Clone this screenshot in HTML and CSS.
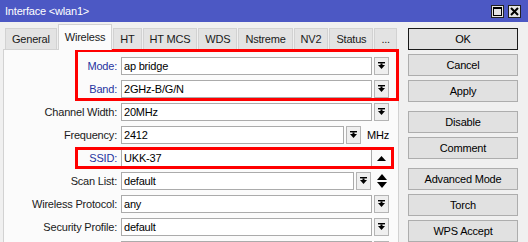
FILE: index.html
```html
<!DOCTYPE html>
<html>
<head>
<meta charset="utf-8">
<link rel="stylesheet" href="styles.css">
</head>
<body>
<div class="window">
  <div class="titlebar">
    <span class="title">Interface &lt;wlan1&gt;</span>
    <div class="tb-btns">
      <span class="tb-btn"><svg width="9" height="9" viewBox="0 0 9 9"><rect x="0.5" y="0.5" width="8" height="8" fill="none" stroke="#000" stroke-width="1"/><rect x="0" y="0" width="9" height="2" fill="#000"/></svg></span>
      <span class="tb-btn"><svg width="9" height="9" viewBox="0 0 9 9"><path d="M1 1 L8 8 M8 1 L1 8" stroke="#000" stroke-width="2"/></svg></span>
    </div>
  </div>
  <div class="main">
    <div class="left">
      <div class="tabs">
        <div class="tab">General</div>
        <div class="tab active">Wireless</div>
        <div class="tab">HT</div>
        <div class="tab">HT MCS</div>
        <div class="tab">WDS</div>
        <div class="tab">Nstreme</div>
        <div class="tab">NV2</div>
        <div class="tab">Status</div>
        <div class="tab">...</div>
      </div>
      <div class="panel">
        <div class="row">
          <span class="label hl">Mode:</span>
          <span class="input">ap bridge</span>
          <span class="dd"><svg width="7" height="8" viewBox="0 0 7 8"><rect x="0" y="0" width="7" height="1.4" fill="#000"/><rect x="2.5" y="1.4" width="2" height="2" fill="#000"/><polygon points="0,3 7,3 3.5,7" fill="#000"/></svg></span>
        </div>
        <div class="row">
          <span class="label hl">Band:</span>
          <span class="input">2GHz-B/G/N</span>
          <span class="dd"><svg width="7" height="8" viewBox="0 0 7 8"><rect x="0" y="0" width="7" height="1.4" fill="#000"/><rect x="2.5" y="1.4" width="2" height="2" fill="#000"/><polygon points="0,3 7,3 3.5,7" fill="#000"/></svg></span>
        </div>
        <div class="row">
          <span class="label">Channel Width:</span>
          <span class="input">20MHz</span>
          <span class="dd"><svg width="7" height="8" viewBox="0 0 7 8"><rect x="0" y="0" width="7" height="1.4" fill="#000"/><rect x="2.5" y="1.4" width="2" height="2" fill="#000"/><polygon points="0,3 7,3 3.5,7" fill="#000"/></svg></span>
        </div>
        <div class="row">
          <span class="label">Frequency:</span>
          <span class="input w-freq">2412</span>
          <span class="dd"><svg width="7" height="8" viewBox="0 0 7 8"><rect x="0" y="0" width="7" height="1.4" fill="#000"/><rect x="2.5" y="1.4" width="2" height="2" fill="#000"/><polygon points="0,3 7,3 3.5,7" fill="#000"/></svg></span>
          <span class="unit">MHz</span>
        </div>
        <div class="row">
          <span class="label hl">SSID:</span>
          <span class="input">UKK-37</span>
          <span class="flat"><svg width="9" height="5" viewBox="0 0 9 5"><polygon points="0,5 9,5 4.5,0" fill="#000"/></svg></span>
        </div>
        <div class="row">
          <span class="label">Scan List:</span>
          <span class="input w-scan">default</span>
          <span class="dd"><svg width="7" height="8" viewBox="0 0 7 8"><rect x="0" y="0" width="7" height="1.4" fill="#000"/><rect x="2.5" y="1.4" width="2" height="2" fill="#000"/><polygon points="0,3 7,3 3.5,7" fill="#000"/></svg></span>
          <span class="updown"><svg width="10" height="14" viewBox="0 0 10 14"><polygon points="0,6 10,6 5,0" fill="#000"/><polygon points="0,8 10,8 5,14" fill="#000"/></svg></span>
        </div>
        <div class="row">
          <span class="label">Wireless Protocol:</span>
          <span class="input">any</span>
          <span class="dd"><svg width="7" height="8" viewBox="0 0 7 8"><rect x="0" y="0" width="7" height="1.4" fill="#000"/><rect x="2.5" y="1.4" width="2" height="2" fill="#000"/><polygon points="0,3 7,3 3.5,7" fill="#000"/></svg></span>
        </div>
        <div class="row">
          <span class="label">Security Profile:</span>
          <span class="input">default</span>
          <span class="dd"><svg width="7" height="8" viewBox="0 0 7 8"><rect x="0" y="0" width="7" height="1.4" fill="#000"/><rect x="2.5" y="1.4" width="2" height="2" fill="#000"/><polygon points="0,3 7,3 3.5,7" fill="#000"/></svg></span>
        </div>
        <div class="row">
          <span class="label"></span>
          <span class="input"></span>
          <span class="dd"></span>
        </div>
      </div>
      <div class="mark mark-1"></div>
      <div class="mark mark-2"></div>
    </div>
    <div class="side">
      <div class="group">
        <div class="btn default">OK</div>
        <div class="btn">Cancel</div>
        <div class="btn">Apply</div>
      </div>
      <div class="group">
        <div class="btn">Disable</div>
        <div class="btn">Comment</div>
      </div>
      <div class="group">
        <div class="btn">Advanced Mode</div>
        <div class="btn">Torch</div>
        <div class="btn">WPS Accept</div>
      </div>
    </div>
  </div>
</div>
</body>
</html>
```
FILE: styles.css
```css
* { box-sizing: border-box; }
html, body { margin: 0; padding: 0; }
body {
  width: 528px;
  height: 242px;
  overflow: hidden;
  background: #f0f0f0;
  font-family: "Liberation Sans", Arial, sans-serif;
  font-size: 11px;
  letter-spacing: -0.2px;
  color: #1a1a1a;
}
.window { width: 528px; height: 242px; overflow: hidden; }
.titlebar {
  height: 22px;
  background: #4c58c4;
  display: flex;
  align-items: center;
  justify-content: space-between;
  padding: 0 7px 0 5px;
}
.title { color: #fff; font-size: 11px; }
.tb-btns { display: flex; gap: 4px; }
.tb-btn {
  width: 13px;
  height: 13px;
  background: #e4e4e4;
  border: 1px solid #222;
  display: flex;
  align-items: center;
  justify-content: center;
}
.main { display: flex; }
.left {
  position: relative;
  width: 399px;
  padding-left: 3px;
}
.tabs {
  display: flex;
  align-items: flex-end;
  height: 27px;
  padding-left: 2px;
}
.tab {
  height: 21px;
  padding: 0 6px;
  display: flex;
  align-items: center;
  background: #e3e3e3;
  border: 1px solid #d2d2d2;
  border-bottom: none;
  margin-right: 1px;
}
.tab.active {
  height: 26px;
  background: #fbfbfb;
  margin-bottom: -1px;
  position: relative;
  z-index: 1;
  padding-bottom: 2px;
}
.panel {
  height: 200px;
  background: #fbfbfb;
  border: 1px solid #d2d2d2;
  padding-top: 7px;
  display: flex;
  flex-direction: column;
  gap: 5px;
}
.row { display: flex; align-items: center; height: 18px; flex-shrink: 0; }
.label {
  width: 113px;
  margin-right: 4px;
  text-align: right;
  white-space: nowrap;
}
.label.hl { color: #2633a0; }
.input {
  width: 251px;
  height: 18px;
  background: #fff;
  border: 1px solid #ababab;
  padding-left: 2px;
  line-height: 16px;
  color: #000;
}
.input.w-freq { width: 223px; }
.input.w-scan { width: 233px; }
.dd {
  width: 15px;
  height: 18px;
  margin-left: 2px;
  background: #efefef;
  border: 1px solid #b4b4b4;
  display: flex;
  align-items: center;
  justify-content: center;
}
.flat {
  width: 17px;
  height: 18px;
  display: flex;
  align-items: center;
  justify-content: center;
  padding-left: 2px;
}
.unit { margin-left: 6px; color: #000; }
.updown { margin-left: 6px; display: flex; align-items: center; }
.mark {
  position: absolute;
  border: 3px solid #ff0000;
}
.mark-1 { left: 75px; top: 27px; width: 324px; height: 52px; }
.mark-2 { left: 75px; top: 125px; width: 319px; height: 22px; }
.side {
  margin-left: 9px;
  width: 110px;
  padding-top: 6px;
  display: flex;
  flex-direction: column;
  gap: 9px;
}
.group { display: flex; flex-direction: column; gap: 4px; }
.btn {
  height: 22px;
  background: #e1e1e1;
  border: 1px solid #adadad;
  display: flex;
  align-items: center;
  justify-content: center;
  color: #000;
}
.btn.default { border: 1px solid #1a1a1a; }
```
